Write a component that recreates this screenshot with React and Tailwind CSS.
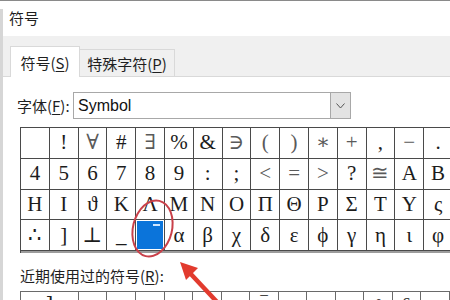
const ROWS = [
  [' ', '!', '∀', '#', '∃', '%', '&', '∋', '(', ')', '∗', '+', ',', '−', '.'],
  ['4', '5', '6', '7', '8', '9', ':', ';', '<', '=', '>', '?', '≅', 'Α', 'Β'],
  ['Η', 'Ι', 'ϑ', 'Κ', 'Λ', 'Μ', 'Ν', 'Ο', 'Π', 'Θ', 'Ρ', 'Σ', 'Τ', 'Υ', 'ς'],
  ['∴', ']', '⊥', '_', '', 'α', 'β', 'χ', 'δ', 'ε', 'ϕ', 'γ', 'η', 'ι', 'φ'],
];

const LIGHT = new Set(['∀', '∃', '∋', '(', ')', '∗', '+', '−', '<', '=', '>', '≅']);

const RECENT = ['□', '−', '○', '', '', '', '‾', '', '', '', 'ℓ', '§', ''];

function Cell({ ch, selected }) {
  if (selected) {
    return (
      <div className="relative w-[28.8px] h-[30.75px] border-r border-b border-[#4a4a4a] p-[1px]">
        <div className="relative w-full h-full bg-[#0b74da]">
          <div className="absolute right-[3px] top-[3px] w-[7px] h-[1.5px] bg-[#cfe6ff]" />
        </div>
      </div>
    );
  }
  return (
    <div
      className={`w-[28.8px] h-[30.75px] border-r border-b border-[#4a4a4a] flex items-center justify-center text-[21px] leading-none ${
        LIGHT.has(ch) ? 'text-[#5a5a5a]' : 'text-[#1c1c1c]'
      }`}
    >
      {ch}
    </div>
  );
}

export default function App() {
  return (
    <div className="relative w-[450px] h-[300px] overflow-hidden bg-white border-t border-[#8a8a8a] text-[#1f1f1f] font-['Noto_Sans_CJK_SC',sans-serif]">
      <div className="absolute left-0 top-[8px] bottom-0 w-[3px] bg-[#d6d6d6]" />

      {/* title */}
      <div className="h-[35px] pl-[9px] pt-[7px] text-[15px] leading-[20px]">符号</div>

      {/* tabs */}
      <div className="h-[41px] bg-[#f0f0f0] border-b border-[#d9d9d9] flex items-end pl-[10px]">
        <div className="-mb-px h-[31px] w-[70px] bg-white border border-b-0 border-[#d9d9d9] flex items-center justify-center text-[15px] leading-none">
          符号(<span className="underline underline-offset-2">S</span>)
        </div>
        <div className="h-[27px] w-[95px] bg-[#f0f0f0] border border-b-0 border-l-0 border-[#d9d9d9] flex items-center justify-center text-[15px] leading-none">
          特殊字符(<span className="underline underline-offset-2">P</span>)
        </div>
      </div>

      {/* font row */}
      <div className="mt-[15px] ml-[17px] flex items-center h-[27px]">
        <div className="w-[56px] text-[15px] leading-none">
          字体(<span className="underline underline-offset-2">F</span>):
        </div>
        <div className="w-[278px] h-[27px] border border-[#a8a8a8] flex">
          <div className="flex-1 pl-[4px] flex items-center text-[16px] font-['Liberation_Sans',sans-serif] text-[#111]">
            Symbol
          </div>
          <div className="w-[20px] h-full bg-[#e3e3e3] border-l border-[#a8a8a8] flex items-center justify-center">
            <svg width="9" height="6" viewBox="0 0 9 6">
              <polyline points="0.5,0.5 4.5,5 8.5,0.5" fill="none" stroke="#555" strokeWidth="1" />
            </svg>
          </div>
        </div>
      </div>

      {/* symbol grid */}
      <div className="mt-[8px] ml-[20px] w-[433px] border-t border-l border-[#4a4a4a] font-['Liberation_Serif','DejaVu_Serif',serif]">
        {ROWS.map((row, r) => (
          <div key={r} className="flex">
            {row.map((ch, c) => (
              <Cell key={c} ch={ch} selected={r === 3 && c === 4} />
            ))}
          </div>
        ))}
        <div className="h-[2px] bg-[#9c9c9c]" />
      </div>

      {/* recent */}
      <div className="mt-[14px] ml-[20px] text-[15px] leading-[18px]">
        近期使用过的符号(<span className="underline underline-offset-2">R</span>):
      </div>
      <div className="mt-[6px] ml-[20px] flex border-t border-l border-[#6a6a6a] font-['Liberation_Serif','DejaVu_Serif',serif]">
        <div className="w-[58px] h-[30px] border-r border-[#6a6a6a] flex justify-center pt-[2px] text-[20px] leading-none">⌉</div>
        {RECENT.map((ch, i) => (
          <div key={i} className="w-[28.6px] h-[30px] border-r border-[#6a6a6a] flex justify-center pt-[3px] text-[20px] leading-none text-[#333]">
            {ch}
          </div>
        ))}
      </div>

      {/* red annotation: ellipse + arrow */}
      <div className="absolute left-[132px] top-[198px] w-[41px] h-[59px] rounded-[50%] border-[2.5px] border-[#c9414a] rotate-[14deg]" />
      <svg className="absolute left-0 top-0" width="450" height="300" viewBox="0 0 450 300">
        <line x1="218" y1="302" x2="188" y2="270" stroke="#e23b2e" strokeWidth="4.5" />
        <polygon points="180,261 198,267 186,279" fill="#e23b2e" />
      </svg>
    </div>
  );
}
